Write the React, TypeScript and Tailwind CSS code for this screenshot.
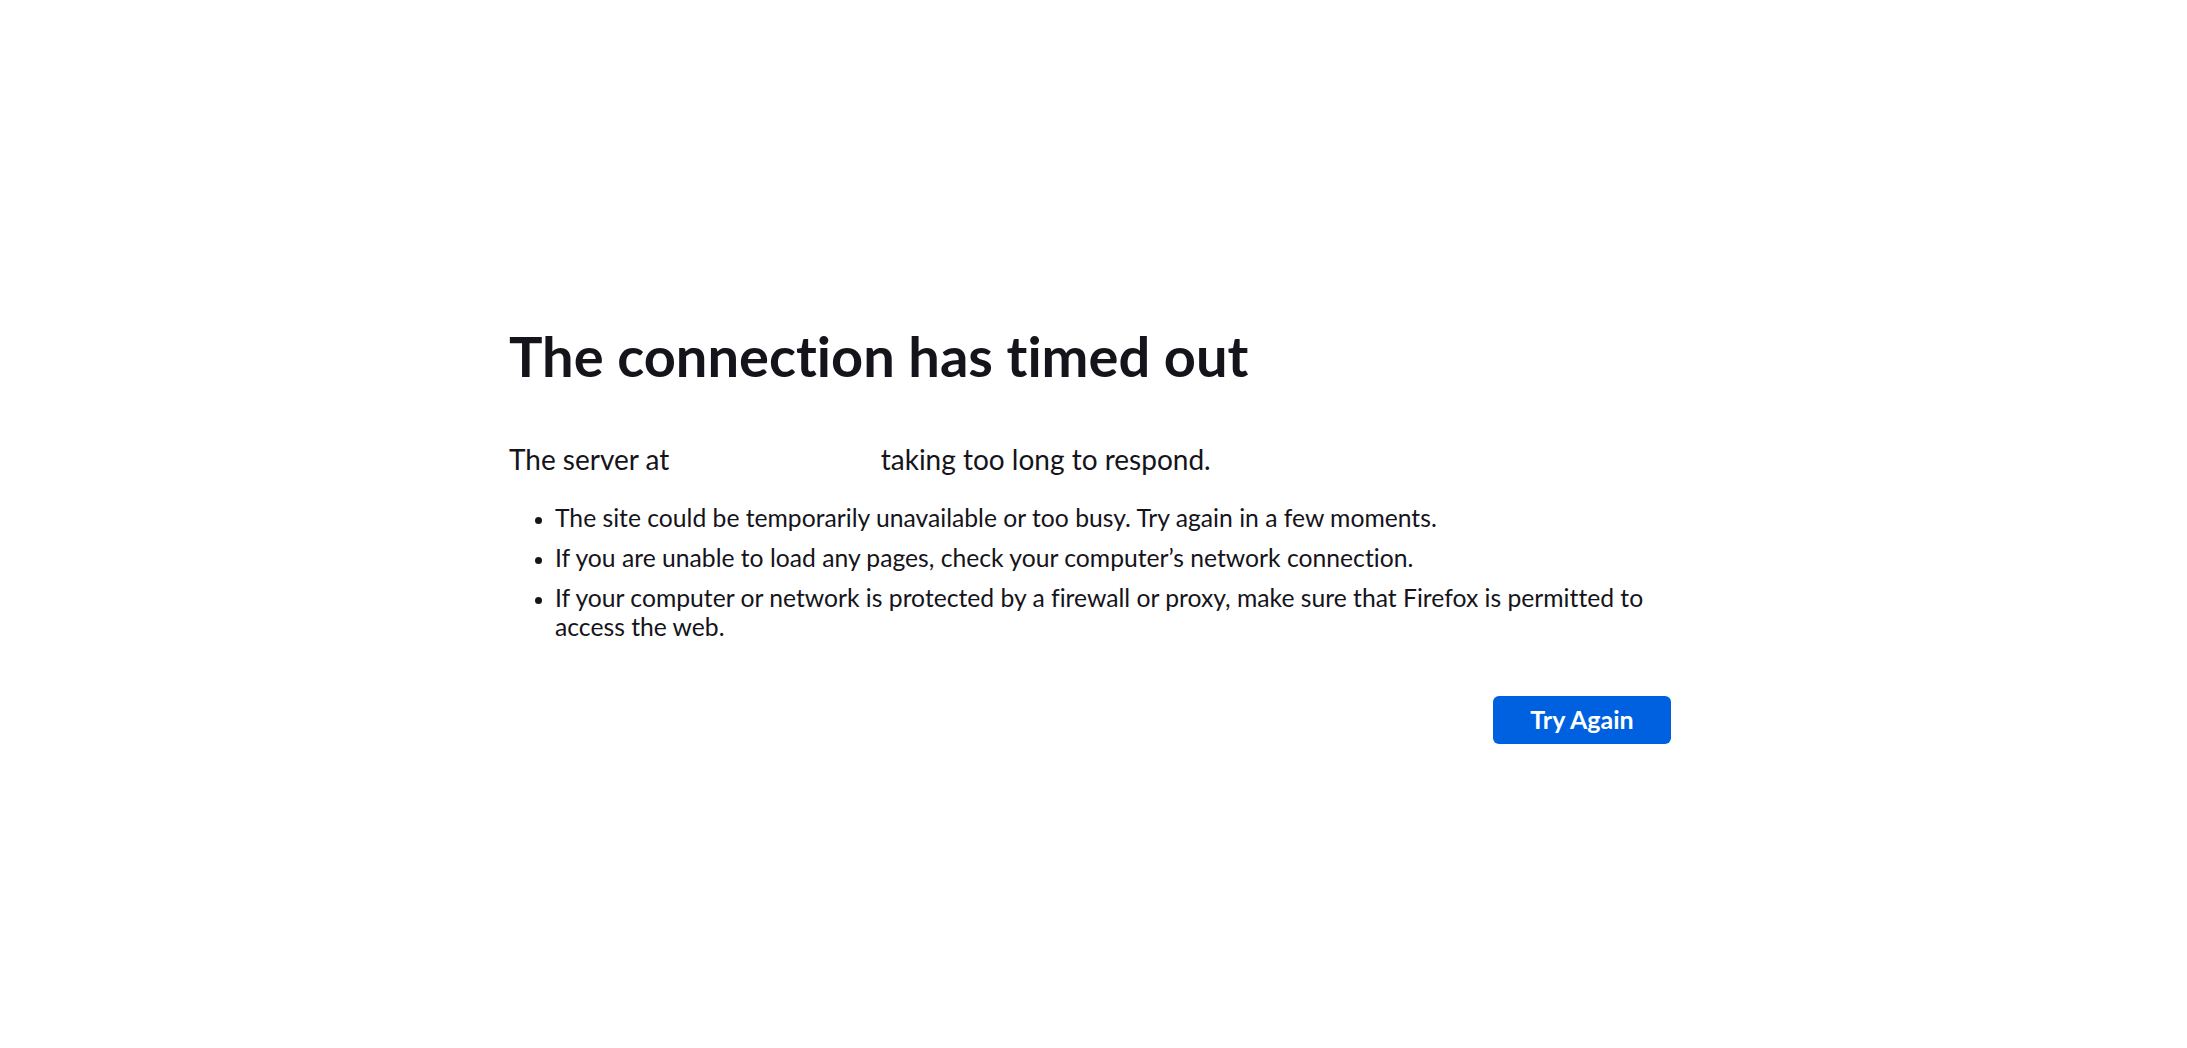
const tips = [
  'The site could be temporarily unavailable or too busy. Try again in a few moments.',
  'If you are unable to load any pages, check your computer’s network connection.',
  'If your computer or network is protected by a firewall or proxy, make sure that Firefox is permitted to access the web.',
]

export default function App() {
  return (
    <div className="min-h-screen bg-white text-[#15141a] font-['Lato',sans-serif] [font-variant-ligatures:none]">
      <main className="mx-auto w-[1169px] pr-[7px] pt-[324px]">
        {/* ── Title ── */}
        <h1 className="text-[56px] leading-[64px] font-bold">The connection has timed out</h1>

        {/* ── Short description (host is redacted in the original) ── */}
        <p className="mt-[53px] text-[28px] leading-[36px]">
          The server at <span className="inline-block w-[197px] align-middle" aria-hidden /> taking too long to respond.
        </p>

        {/* ── Suggestions ── */}
        <ul className="mt-[26px] text-[24.7px] leading-[29px]">
          {tips.map((t, i) => (
            <li key={i} className={`flex ${i > 0 ? 'mt-[11px]' : ''}`}>
              <span className="mt-[14px] ml-[26px] mr-[13px] h-[7px] w-[7px] shrink-0 rounded-full bg-[#15141a]" />
              <span>{t}</span>
            </li>
          ))}
        </ul>

        {/* ── Action ── */}
        <div className="mt-[55px] flex justify-end">
          <button className="h-[48px] w-[178px] rounded-md bg-[#0061e0] text-[25px] font-bold text-white">
            Try Again
          </button>
        </div>
      </main>
    </div>
  )
}
